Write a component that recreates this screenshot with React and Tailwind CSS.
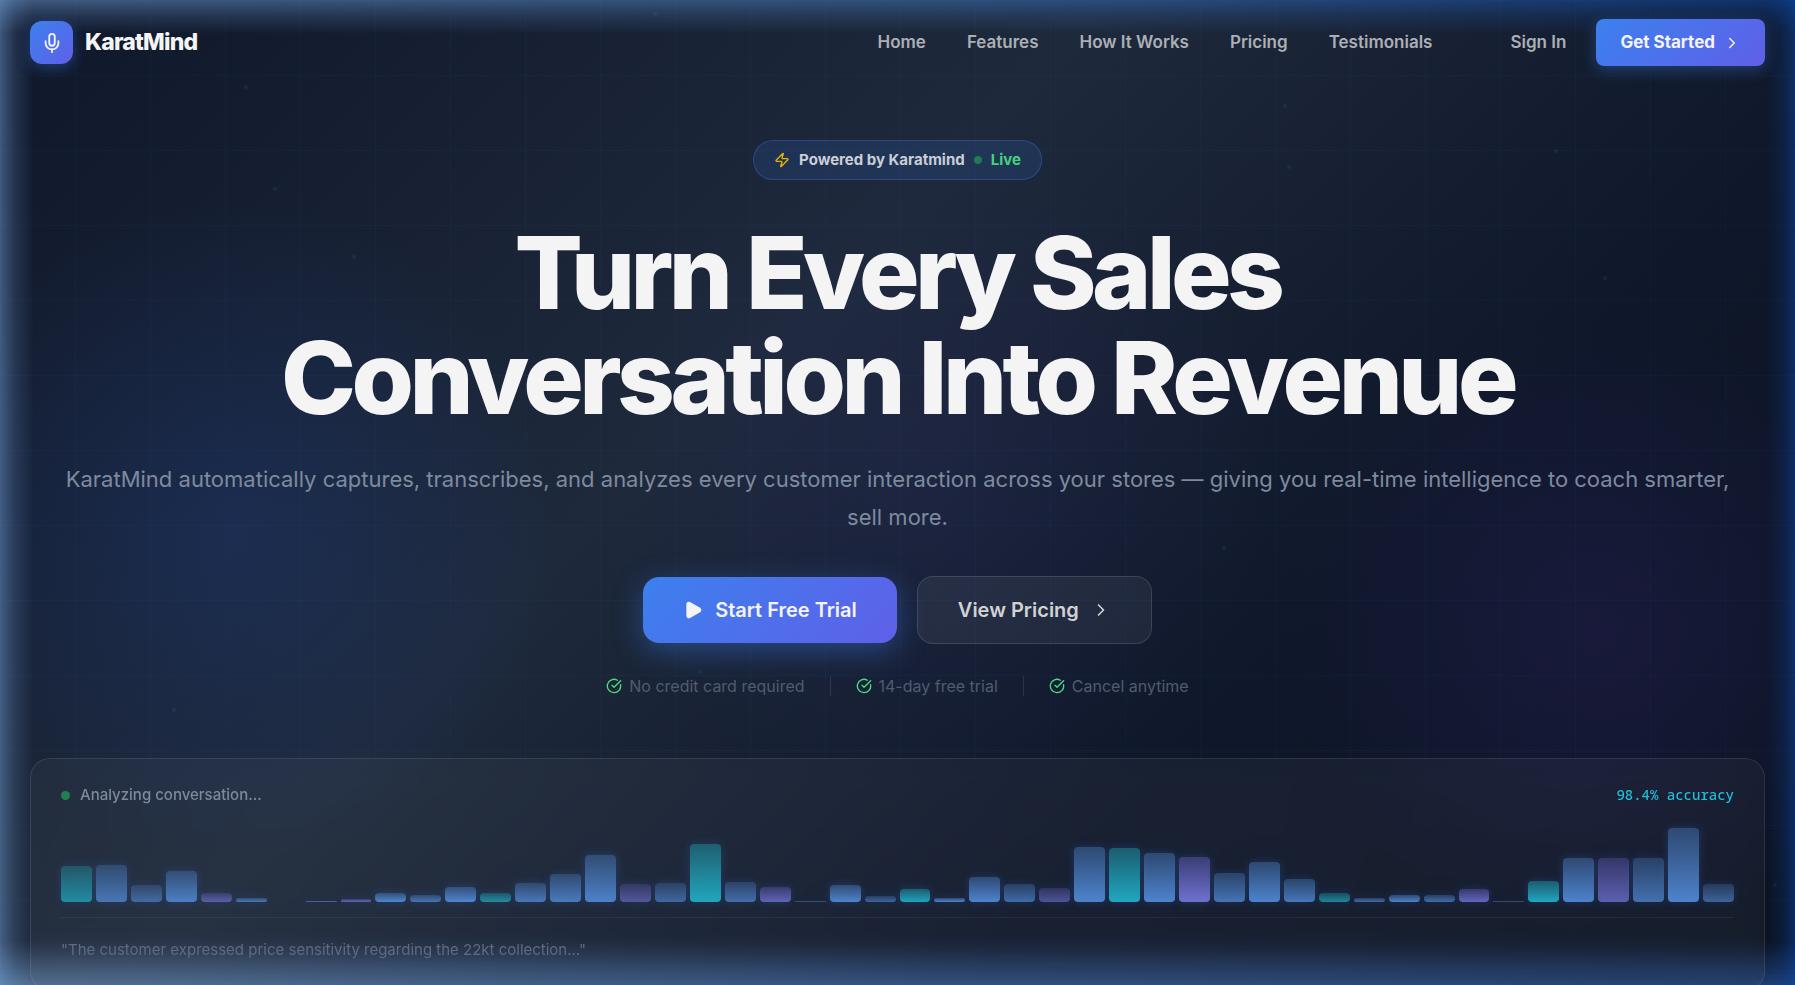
import React from "react";
import { Mic, ChevronRight, Zap, Play, CircleCheckBig } from "lucide-react";

const NAV_LINKS = ["Home", "Features", "How It Works", "Pricing", "Testimonials"];

const PERKS = ["No credit card required", "14-day free trial", "Cancel anytime"];

const BAR_COLORS = {
  blue: "from-[#4678b8]/60 to-[#5c9df5]",
  violet: "from-[#5a56b0]/65 to-[#7f80ec]",
  cyan: "from-[#1f96a6]/65 to-[#22cbe4]",
};

// [colour, height in px, opacity in %]
const BARS = [
  ["cyan", 36, 60], ["blue", 37, 65], ["blue", 17, 55], ["blue", 31, 72],
  ["violet", 9, 60], ["blue", 4, 68], ["blue", 0, 0], ["blue", 1, 70],
  ["violet", 3, 70], ["blue", 9, 80], ["blue", 7, 65], ["blue", 15, 80],
  ["cyan", 9, 62], ["blue", 19, 68], ["blue", 28, 70], ["blue", 47, 76],
  ["violet", 18, 55], ["blue", 19, 55], ["cyan", 58, 78], ["blue", 20, 60],
  ["violet", 15, 70], ["blue", 1, 50], ["blue", 17, 80], ["blue", 6, 55],
  ["cyan", 13, 78], ["blue", 4, 80], ["blue", 25, 80], ["blue", 18, 60],
  ["violet", 14, 55], ["blue", 55, 80], ["cyan", 54, 80], ["blue", 49, 80],
  ["violet", 45, 85], ["blue", 29, 68], ["blue", 40, 80], ["blue", 23, 70],
  ["cyan", 9, 60], ["blue", 4, 62], ["blue", 7, 80], ["blue", 7, 62],
  ["violet", 13, 75], ["blue", 1, 50], ["cyan", 21, 80], ["blue", 44, 80],
  ["violet", 44, 68], ["blue", 44, 65], ["blue", 74, 80], ["blue", 18, 55],
];

// [left %, top %]
const PARTICLES = [
  [13.6, 8.6], [15.2, 19], [19.6, 25.9], [36.4, 1.2], [71.5, 10.6],
  [71.7, 16.8], [86.6, 15.1], [89.3, 28], [68.1, 55.4], [9.6, 71.9],
  [38.9, 68], [98.8, 89.6],
];

function Backdrop() {
  return (
    <div className="absolute inset-0 overflow-hidden bg-[linear-gradient(135deg,#0f172a_0%,#1e293b_40%,#0f172a_70%,#0c1322_100%)]" aria-hidden="true">
      <div className="absolute inset-0 bg-[radial-gradient(circle_330px_at_13%_54%,rgba(37,99,235,0.15),transparent),radial-gradient(circle_310px_at_89%_64%,rgba(109,60,217,0.11),transparent),radial-gradient(circle_340px_at_52%_48%,rgba(80,60,200,0.08),transparent)]" />
      <div className="absolute inset-0 bg-[linear-gradient(rgba(59,130,246,0.04)_1px,transparent_1px),linear-gradient(90deg,rgba(59,130,246,0.04)_1px,transparent_1px)] bg-size-[75px_75px]" />
      {PARTICLES.map(([left, top]) => (
        <span
          key={`${left}-${top}`}
          className="absolute size-1 rounded-full bg-blue-400/9"
          style={{ left: `${left}%`, top: `${top}%` }}
        />
      ))}
    </div>
  );
}

function EdgeGlow() {
  return (
    <div className="pointer-events-none absolute inset-0" aria-hidden="true">
      <div className="absolute inset-0 bg-[linear-gradient(90deg,#78a8e0,#4884cc_50%,#0a4cb4)] opacity-45 mask-[linear-gradient(#000,rgba(0,0,0,0.45)_16px,transparent_34px)]" />
      <div className="absolute inset-0 bg-[linear-gradient(90deg,#88b4e8,#5088d8_50%,#3068c0)] opacity-50 mask-[linear-gradient(0deg,#000,rgba(0,0,0,0.6)_16px,transparent_44px)]" />
      <div className="absolute inset-0 bg-[#78a8e0] opacity-44 mask-[linear-gradient(90deg,#000,rgba(0,0,0,0.4)_15px,transparent_34px)]" />
      <div className="absolute inset-0 bg-[#0a4cb4] opacity-42 mask-[linear-gradient(270deg,#000,rgba(0,0,0,0.4)_12px,transparent_28px)]" />
    </div>
  );
}

function Header() {
  return (
    <header className="flex items-center justify-between px-[30px] pt-[19px]">
      <a href="#home" className="flex items-center gap-3">
        <span className="flex size-[43px] items-center justify-center rounded-xl bg-[linear-gradient(135deg,#3c80ee,#5f60e8)] shadow-[0_4px_14px_rgba(59,130,246,0.35)]">
          <Mic className="size-[22px] text-[#f4f4f5]" />
        </span>
        <span className="text-[23px] font-extrabold tracking-[-0.035em] text-[#f4f4f5]">KaratMind</span>
      </a>
      <div className="flex items-center">
        <nav className="mr-[78px] flex gap-[41px] text-[17px] font-semibold text-[#abafb6]">
          {NAV_LINKS.map((link) => (
            <a key={link} href={`#${link.toLowerCase().replaceAll(" ", "-")}`}>{link}</a>
          ))}
        </nav>
        <a href="#sign-in" className="mr-[30px] text-[17px] font-semibold text-[#abafb6]">Sign In</a>
        <button className="flex h-[47px] items-center gap-2 rounded-lg bg-[linear-gradient(135deg,#3c80ee,#5f60e8)] px-6 text-[17px] font-bold text-[#f4f4f5] shadow-[0_4px_15px_rgba(59,130,246,0.35)]">
          Get Started
          <ChevronRight className="size-[18px]" />
        </button>
      </div>
    </header>
  );
}

function AnalysisCard() {
  return (
    <section className="mx-[30px] rounded-[20px] border border-white/9 bg-white/4 px-[30px] pt-[24px] pb-[28px] backdrop-blur-sm">
      <div className="flex items-center justify-between">
        <div className="flex items-center gap-[10px] text-[15px] leading-6 font-medium text-[#7e899b]">
          <span className="size-[9px] rounded-full bg-[#22804d]" />
          Analyzing conversation...
        </div>
        <span className="font-['Noto_Sans_Mono','DejaVu_Sans_Mono',monospace] text-sm font-medium text-[#22bfd6]">98.4% accuracy</span>
      </div>
      <div className="mt-[20px] flex h-[75px] items-end gap-1">
        {BARS.map(([color, height, opacity], i) => (
          <div
            key={i}
            className={`flex-1 rounded-[4px] bg-linear-to-b shadow-[0_0_10px_rgba(59,130,246,0.3)] ${BAR_COLORS[color]}`}
            style={{ height, opacity: opacity / 100 }}
          />
        ))}
      </div>
      <div className="mt-[15px] border-t border-white/6 pt-[20px] text-[15px] leading-6 text-[#5d6b83]">
        "The customer expressed price sensitivity regarding the 22kt collection..."
      </div>
    </section>
  );
}

export default function App() {
  return (
    <div className="relative h-screen overflow-hidden bg-[#0f172a] font-['Inter',sans-serif]">
      <Backdrop />
      <EdgeGlow />
      <div className="relative">
        <Header />
        <main className="mt-[74px] flex flex-col">
          <section className="flex flex-col items-center px-[50px] text-center">
            <div className="flex h-10 items-center gap-[9px] rounded-full border border-[#3b82f6]/30 bg-[#3b82f6]/14 px-5 text-[15px] font-bold text-[#c9ced7]">
              <Zap className="size-4 text-[#eab308]" />
              Powered by Karatmind
              <span className="size-2 rounded-full bg-[#227a53]" />
              <span className="text-[#45d37c]">Live</span>
            </div>
            <h1 className="mt-[40px] text-[101px] leading-[105px] font-extrabold tracking-[-0.045em] text-[#f4f4f5]">
              Turn Every Sales
              <br />
              Conversation Into Revenue
            </h1>
            <p className="mt-[30px] text-[22px] leading-[38px] text-[#7e8a9e]">
              KaratMind automatically captures, transcribes, and analyzes every customer interaction across your stores — giving you real-time intelligence to coach smarter, sell more.
            </p>
            <div className="mt-[40px] flex items-center gap-5">
              <button className="flex h-[66px] items-center gap-3 rounded-2xl bg-[linear-gradient(135deg,#3c80ee,#5f60e8)] px-10 text-xl font-semibold text-[#f4f4f5] shadow-[0_8px_30px_rgba(59,130,246,0.4)]">
                <Play className="size-5 fill-current" />
                Start Free Trial
              </button>
              <button className="flex h-[68px] items-center gap-3 rounded-2xl border border-white/12 bg-white/6 px-10 text-xl font-semibold text-[#d0d2d6]">
                View Pricing
                <ChevronRight className="size-[20px]" />
              </button>
            </div>
            <ul className="mt-[30px] flex items-center text-base text-[#4f5c70]">
              {PERKS.map((perk, i) => (
                <li key={perk} className="flex items-center">
                  {i > 0 && <span className="mx-[25px] h-5 w-px bg-white/10" />}
                  <CircleCheckBig className="mr-[7px] size-4 text-[#4ade80]" />
                  {perk}
                </li>
              ))}
            </ul>
          </section>
          <div className="mt-[60px]">
            <AnalysisCard />
          </div>
        </main>
      </div>
    </div>
  );
}
